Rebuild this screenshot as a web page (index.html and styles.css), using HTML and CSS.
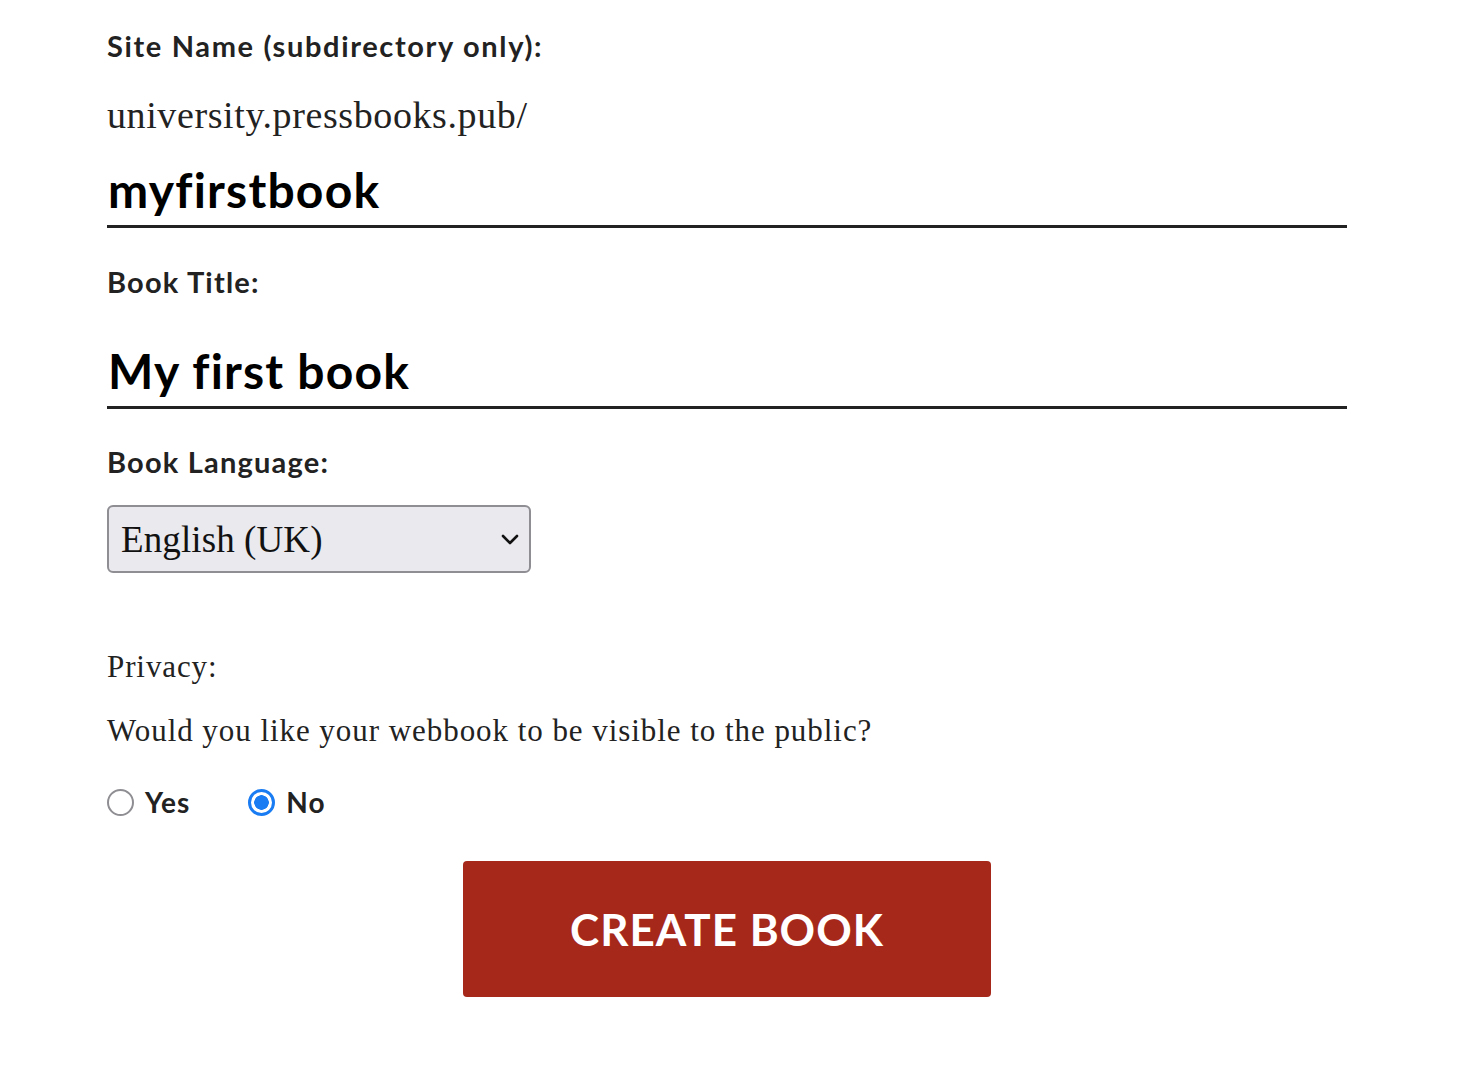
FILE: index.html
```html
<!DOCTYPE html>
<html lang="en">
<head>
<meta charset="utf-8">
<title>Create Book</title>
<link rel="stylesheet" href="styles.css">
</head>
<body>
<form class="signup">
  <label class="field-label label-site" for="blogname">Site Name (subdirectory only):</label>
  <div class="prefix">university.pressbooks.pub/</div>
  <input class="text-input input-site" id="blogname" type="text" value="myfirstbook">

  <label class="field-label label-title" for="blog_title">Book Title:</label>
  <input class="text-input input-title" id="blog_title" type="text" value="My first book">

  <label class="field-label label-lang" for="lang">Book Language:</label>
  <div class="select-wrap">
    <select class="select" id="lang">
      <option>English (UK)</option>
    </select>
    <svg class="chevron" viewBox="0 0 18 11" width="18" height="11" aria-hidden="true"><path d="M2 2 L9 9 L16 2" fill="none" stroke="#111" stroke-width="2.6" stroke-linecap="round" stroke-linejoin="round"/></svg>
  </div>

  <p class="privacy">Privacy:</p>
  <p class="question">Would you like your webbook to be visible to the public?</p>

  <div class="radios">
    <label class="radio"><input type="radio" name="public" value="1"><span>Yes</span></label>
    <label class="radio"><input type="radio" name="public" value="0" checked><span>No</span></label>
  </div>

  <div class="actions">
    <button type="button" class="create-btn">CREATE BOOK</button>
  </div>
</form>
</body>
</html>
```

FILE: styles.css
```css
html, body {
  margin: 0;
  padding: 0;
  background: #ffffff;
}

body {
  font-family: "Liberation Serif", "DejaVu Serif", serif;
  color: #222222;
}

.signup {
  display: flex;
  flex-direction: column;
  align-items: flex-start;
  width: 1240px;
  padding: 30px 117px 0 107px;
}

.field-label {
  display: block;
  font-family: Lato, "Open Sans", sans-serif;
  font-weight: 700;
  font-size: 29px;
  line-height: 32px;
  color: #222222;
  letter-spacing: 1.2px;
  margin: 0;
}

.label-site {
  letter-spacing: 1.65px;
}

.prefix {
  margin-top: 31px;
  font-family: "Liberation Serif", serif;
  font-size: 38px;
  line-height: 44px;
  color: #222222;
  letter-spacing: 0.6px;
}

.text-input {
  box-sizing: border-box;
  width: 1240px;
  height: 68px;
  border: none;
  border-bottom: 3px solid #222222;
  padding: 0 0 6px 1px;
  background: transparent;
  font-family: Lato, "Open Sans", sans-serif;
  font-weight: 700;
  font-size: 48px;
  color: #000000;
  letter-spacing: 1.2px;
  outline: none;
}

.input-site { margin-top: 23px; }
.label-title { margin-top: 38px; }
.input-title { margin-top: 43px; }
.label-lang { margin-top: 37px; }

.select-wrap {
  position: relative;
  margin-top: 27px;
}

.select {
  appearance: none;
  -webkit-appearance: none;
  box-sizing: border-box;
  width: 424px;
  height: 68px;
  border: 2px solid #8e8e93;
  border-radius: 6px;
  background: #e9e9ee;
  padding: 0 40px 0 12px;
  font-family: "Liberation Serif", serif;
  font-size: 37px;
  color: #111111;
  letter-spacing: 0.1px;
}

.chevron {
  position: absolute;
  right: 12px;
  top: 29px;
  pointer-events: none;
}

.privacy {
  margin: 76px 0 0 0;
  font-size: 31px;
  line-height: 36px;
  color: #222222;
  letter-spacing: 0.9px;
}

.question {
  margin: 28px 0 0 0;
  font-size: 31px;
  line-height: 36px;
  color: #222222;
  letter-spacing: 0.95px;
}

.radios {
  display: flex;
  gap: 58px;
  margin-top: 37px;
  height: 32px;
  align-items: center;
}

.radio {
  display: flex;
  align-items: center;
  gap: 11px;
  font-family: Lato, "Open Sans", sans-serif;
  font-weight: 700;
  font-size: 28px;
  color: #222222;
  letter-spacing: 1px;
}

.radio input {
  appearance: none;
  -webkit-appearance: none;
  box-sizing: border-box;
  width: 27px;
  height: 27px;
  margin: 0;
  border: 2px solid #8e8e93;
  border-radius: 50%;
  background: #ffffff;
}

.radio input:checked {
  border: 3px solid #1a7cf2;
  background: radial-gradient(circle, #1a7cf2 0 7px, #ffffff 7.5px);
}

.actions {
  align-self: stretch;
  display: flex;
  justify-content: center;
  margin-top: 43px;
}

.create-btn {
  width: 528px;
  height: 136px;
  border: none;
  border-radius: 4px;
  background: #a6281b;
  color: #ffffff;
  font-family: Lato, "Open Sans", sans-serif;
  font-weight: 700;
  font-size: 44px;
  letter-spacing: 1px;
  cursor: pointer;
}
```
